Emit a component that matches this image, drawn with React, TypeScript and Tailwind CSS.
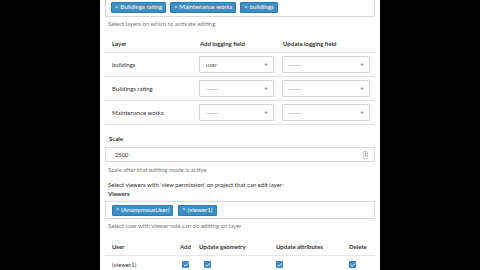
import { Check } from 'lucide-react';

const tagCls = "flex items-center gap-[2px] h-[11px] px-[3px] rounded-[1px] bg-[#3d8ec4] border border-[#2f7bb0] text-white text-[6.2px] leading-none";

function Tag({ label }: { label: string }) {
    return (
        <span className={tagCls}>
            <span className="text-[5.5px]">×</span>
            {label}
        </span>
    );
}

function Select({ value }: { value: string }) {
    return (
        <div className="flex items-center justify-between h-[17px] pl-[6px] pr-[5px] border border-[#d6d6d6] rounded-[1px] bg-white">
            <span className="text-[5.8px] text-[#666]">{value}</span>
            <span className="text-[4px] text-[#666]">▼</span>
        </div>
    );
}

function Box() {
    return (
        <span className="flex items-center justify-center w-[7px] h-[7px] rounded-[1px] bg-[#3d86c6]">
            <Check size={6} strokeWidth={4} className="text-white" />
        </span>
    );
}

const rows = [
    { name: 'buildings', add: 'user', upd: '------' },
    { name: 'Buildings rating', add: '------', upd: '------' },
    { name: 'Maintenance works', add: '------', upd: '------' },
];

export default function App() {
    return (
        <div className="w-[480px] h-[270px] bg-black flex justify-center overflow-hidden" style={{ fontFamily: 'Lato, "Liberation Sans", sans-serif' }}>
            <div className="w-[280px] h-full bg-white pl-[5px] pr-[5px] text-[#333] text-[6px] leading-[6px]">
                {/* layers tag box */}
                <div className="mt-[-5px] h-[22px] border border-[#d9d9d9] flex items-end gap-[4px] pl-[5px] pb-[3px]">
                    <Tag label="Buildings rating" />
                    <Tag label="Maintenance works" />
                    <Tag label="buildings" />
                </div>
                <p className="mt-[4px] pl-[3px] text-[#7a7a7a]">Select layers on which to activate editing</p>

                {/* layers table */}
                <div className="mt-[8px]">
                    <div className="grid grid-cols-[90px_83px_97px] h-[18px] items-center font-bold border-b border-[#e2e2e2]">
                        <span className="pl-[7px]">Layer</span>
                        <span className="pl-[5px]">Add logging field</span>
                        <span className="pl-[5px]">Update logging field</span>
                    </div>
                    {rows.map(r => (
                        <div key={r.name} className="grid grid-cols-[90px_83px_97px] h-[24px] items-center border-b border-[#e6e6e6]">
                            <span className="pl-[7px]">{r.name}</span>
                            <div className="pl-[4px] pr-[4px]"><Select value={r.add} /></div>
                            <div className="pl-[4px] pr-[5px]"><Select value={r.upd} /></div>
                        </div>
                    ))}
                </div>

                {/* scale */}
                <p className="mt-[11px] pl-[4px] font-bold">Scale</p>
                <div className="mt-[5px] h-[15px] border border-[#d9d9d9] flex items-center justify-between pl-[9px] pr-[6px]">
                    <span className="text-[5.8px]">2500</span>
                    <span className="flex flex-col items-center justify-center w-[5px] h-[8px] border border-[#ccc] rounded-[1px] text-[3px] text-[#777] leading-none">
                        <span>▲</span>
                        <span>▼</span>
                    </span>
                </div>
                <p className="mt-[5px] pl-[3px] text-[#7a7a7a]">Scale after that editing mode is active</p>

                <p className="mt-[9px] pl-[3px]">Select viewers with 'view permission' on project that can edit layer:</p>
                <p className="mt-[3px] pl-[3px] font-bold">Viewers</p>
                <div className="mt-[4px] h-[18px] border border-[#d9d9d9] flex items-center gap-[5px] pl-[6px]">
                    <Tag label="(AnonymousUser)" />
                    <Tag label="(viewer1)" />
                </div>
                <p className="mt-[4px] pl-[3px] text-[#7a7a7a]">Select user with viewer role can do editing on layer</p>

                {/* viewers table */}
                <div className="mt-[10px]">
                    <div className="grid grid-cols-[75px_19px_76px_72px_38px] h-[16px] items-center font-bold">
                        <span className="pl-[7px]">User</span>
                        <span>Add</span>
                        <span>Update geometry</span>
                        <span className="pl-[1px]">Update attributes</span>
                        <span className="pl-[2px]">Delete</span>
                    </div>
                    <div className="grid grid-cols-[75px_19px_76px_72px_38px] h-[18px] items-center border-t border-[#e6e6e6]">
                        <span className="pl-[7px]">(viewer1)</span>
                        <span className="pl-[2px]"><Box /></span>
                        <span className="pl-[5px]"><Box /></span>
                        <span className="pl-[1px]"><Box /></span>
                        <span className="pl-[2px]"><Box /></span>
                    </div>
                </div>
            </div>
        </div>
    );
}
